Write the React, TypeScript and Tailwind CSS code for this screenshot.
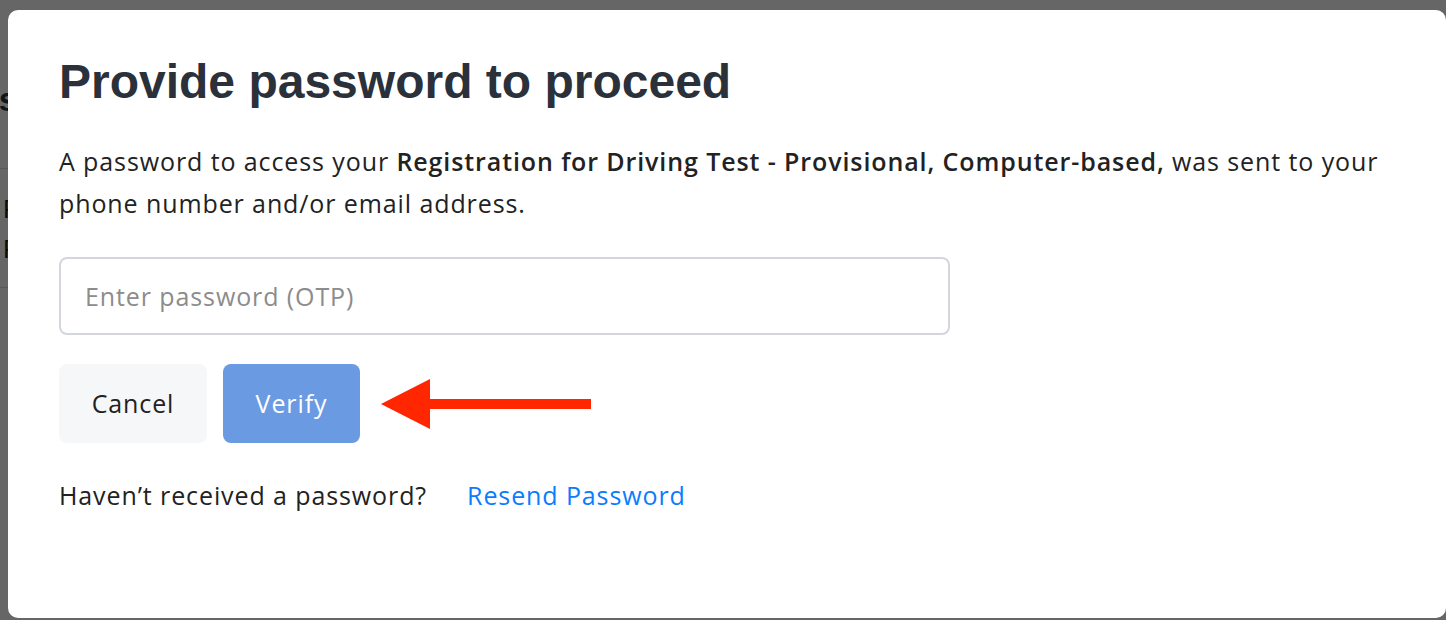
import React from "react";

function BackPage() {
    // page behind the dialog, only a sliver shows at the left edge
    return (
        <div className="absolute inset-0 bg-white" style={{ fontFamily: "'Liberation Sans', Arial, sans-serif" }}>
            <div className="pt-[82px] -ml-[22px] text-[34px] font-bold text-[#2d3340] leading-none">Ls</div>
            <div className="mt-[52px] h-px bg-[#d8dbe0]" />
            <div className="pt-[20px] ml-[3px] text-[26px] text-[#222] leading-[40px]">
                <div>F</div>
                <div>F</div>
            </div>
            <div className="mt-[18px] h-px bg-[#d8dbe0]" />
        </div>
    );
}

export default function App() {
    return (
        <div className="relative h-[620px] w-[1446px] overflow-hidden">
            <BackPage />
            <div className="absolute inset-0 bg-black/60 pl-2 pt-[10px]">
                <div className="h-[608px] w-[1438px] rounded-[10px] bg-white pl-[51px] pt-[42px]">
                    <h2
                        className="text-[48px] font-bold leading-[60px] text-[#2b313b]"
                        style={{ fontFamily: "'Liberation Sans', Arial, sans-serif" }}
                    >
                        Provide password to proceed
                    </h2>
                    <div className="tracking-[0.9px]" style={{ fontFamily: "'Open Sans', 'Noto Sans', sans-serif" }}>
                        <p className="mt-[28px] w-[1345px] text-[25px] leading-[42px] text-[#222]">
                            A password to access your{" "}
                            <b className="font-semibold">Registration for Driving Test - Provisional, Computer-based,</b>{" "}
                            was sent to your phone number and/or email address.
                        </p>
                        <input
                            placeholder="Enter password (OTP)"
                            className="mt-[33px] block h-[78px] w-[891px] rounded-[8px] border-2 border-[#d3d7dc] px-6 text-[25px] text-[#222] outline-none placeholder:text-[#8c8c8c]"
                        />
                        <div className="mt-[29px] flex items-center">
                            <button className="h-[79px] w-[148px] rounded-[8px] bg-[#f6f7f9] text-[25px] text-[#222]">
                                Cancel
                            </button>
                            <button className="ml-4 h-[79px] w-[137px] rounded-[8px] bg-[#6a9ae2] text-[25px] text-white">
                                Verify
                            </button>
                            <svg width="210" height="52" viewBox="0 0 210 52" className="ml-[21px]">
                                <polygon points="0,26 49,1 49,51" fill="#ff2600" />
                                <rect x="48" y="21" width="162" height="10" fill="#ff2600" />
                            </svg>
                        </div>
                        <div className="mt-[36px] flex text-[25px] leading-[32px] text-[#222]">
                            <span>Haven’t received a password?</span>
                            <a className="ml-[40px] text-[#0a7cff]">Resend Password</a>
                        </div>
                    </div>
                </div>
            </div>
        </div>
    );
}
